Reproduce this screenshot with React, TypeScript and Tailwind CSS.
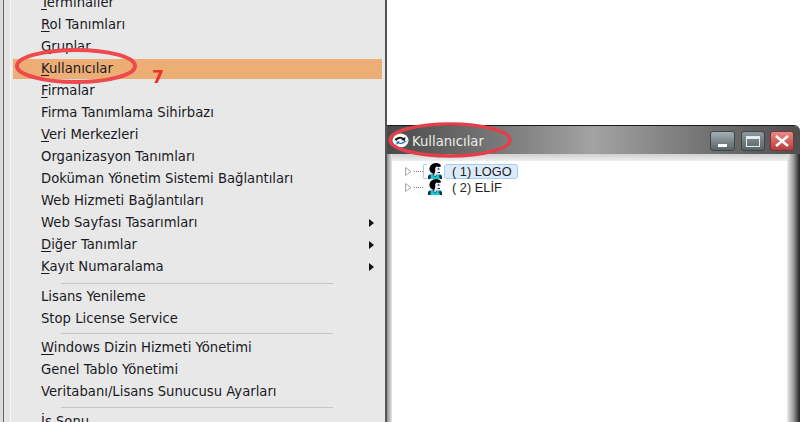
const menuFont = { fontFamily: '"DejaVu Sans", Tahoma, sans-serif' };

type Row = { label: string; key?: string; rest?: string; arrow?: boolean; active?: boolean };

const groups: Row[][] = [
  [
    { label: "", key: "T", rest: "erminaller" },
    { label: "", key: "R", rest: "ol Tanımları" },
    { label: "", key: "G", rest: "ruplar" },
    { label: "", key: "K", rest: "ullanıcılar", active: true },
    { label: "", key: "F", rest: "irmalar" },
    { label: "Firma Tanımlama Sihirbazı" },
    { label: "", key: "V", rest: "eri Merkezleri" },
    { label: "Organizasyon Tanımları" },
    { label: "Doküman Yönetim Sistemi Bağlantıları" },
    { label: "Web Hizmeti Bağlantıları" },
    { label: "Web Sayfası Tasarımları", arrow: true },
    { label: "", key: "D", rest: "iğer Tanımlar", arrow: true },
    { label: "", key: "K", rest: "ayıt Numaralama", arrow: true },
  ],
  [{ label: "Lisans Yenileme" }, { label: "Stop License Service" }],
  [
    { label: "", key: "W", rest: "indows Dizin Hizmeti Yönetimi" },
    { label: "Genel Tablo Yönetimi" },
    { label: "Veritabanı/Lisans Sunucusu Ayarları" },
  ],
  [{ label: "İş Sonu" }],
];

const separatorGaps = ["mt-[5px] mb-[2px]", "mt-[3px] mb-[3px]", "mt-[4px] mb-[3px]"];

function MenuRow({ row }: { row: Row }) {
  return (
    <div className="h-[22px] py-px">
      <div
        className={`flex h-[20px] items-center justify-between pl-[28px] pr-[8px] text-[13.2px] text-[#1a1a24] ${
          row.active ? "bg-[#edae75]" : ""
        }`}
      >
        <span className="whitespace-nowrap">
          {row.key ? <span className="underline underline-offset-2">{row.key}</span> : null}
          {row.rest ?? row.label}
        </span>
        {row.arrow ? (
          <span className="h-0 w-0 border-y-[4px] border-l-[5px] border-y-transparent border-l-[#111]" />
        ) : null}
      </div>
    </div>
  );
}

function Person() {
  return (
    <svg width="16" height="16" viewBox="0 0 16 16" className="shrink-0">
      <path d="M1 16v-2c0-2 2-3 4-3h6c2 0 4 1 4 3v2z" fill="#17c6d6" />
      <path d="M1 16v-2c0-1 1-2 2-2.500l1 1.500-1 3zM15 16v-2c0-1-1-2-2-2.500L12 13l1 3z" fill="#06303a" />
      <path d="M6 11l2 3 2.500-3z" fill="#fff" stroke="#000" strokeWidth="0.600" />
      <path d="M6 3h6.500l1.500 4-.8 1 .3 2-2 1.500H8L6 9z" fill="#f2f2f2" />
      <path d="M2.500 7C2 3 5 0 9 0c3 0 5 1.500 5 3.500-2 .5-3.500.5-5 0-.5 1.500-1 2-.8 3.500.2 1.500-.2 3-1.200 4C5 10.500 3 9.500 2.500 7z" fill="#000" />
      <circle cx="11.500" cy="6" r="1" fill="#2457d6" />
      <path d="M10.500 9.500h2.500" stroke="#000" strokeWidth="0.900" />
    </svg>
  );
}

function TreeItem({ label, selected }: { label: string; selected?: boolean }) {
  return (
    <div className="flex h-[16px] items-center">
      <svg width="7" height="9" viewBox="0 0 7 9" className="ml-[13px] shrink-0">
        <path d="M.5.5l5.500 4-5.500 4z" fill="#fff" stroke="#a8a8a8" />
      </svg>
      <span className="ml-[2px] w-[9px] border-t border-dotted border-[#777]" />
      <span className={`h-[15px] w-[4px] rounded-l-[2px] border-y border-l ${selected ? "border-[#a9cdf0]" : "border-transparent"}`} />
      <Person />
      <span
        className={`ml-px h-[15px] w-[74px] shrink-0 whitespace-nowrap rounded-[3px] border pl-[7px] text-[12.8px] leading-[13px] text-[#222] ${
          selected ? "border-[#a9cdf0] bg-[#dcebfb]" : "border-transparent"
        }`}
        style={{ fontFamily: '"Liberation Sans", Arial, sans-serif' }}
      >
        {label}
      </span>
    </div>
  );
}

function WindowWidget() {
  return (
    <div className="absolute left-[387px] top-[125px] flex h-[320px] w-[413px] flex-col overflow-hidden rounded-tr-[6px] border-t border-[#1a1a1a]">
      <div className="flex h-[28px] shrink-0 items-start bg-gradient-to-r from-[#4a4a4a] via-[#a3a3a3] via-50% to-[#4e4e4e] pr-[6px]">
        <svg width="17" height="15" viewBox="0 0 17 15" className="ml-[5px] mt-[7px] shrink-0">
          <ellipse cx="8.500" cy="7.500" rx="8" ry="7" fill="#fff" />
          <path d="M2.500 6.500C5 3.500 9 3 11.500 5L13.500 4l-.5 4-4-1 1.200-1C8 5.200 6 5.800 4.500 8z" fill="#1c1c1c" />
          <path d="M14.500 8c-2 3-6 3.500-8.500 2.500L4.500 12l0-3.500 3.500 0-1 1c2 .6 4.200.2 5.500-1.700z" fill="#1f6fb0" />
        </svg>
        <span className="ml-[3px] mt-[7px] text-[13.2px] leading-[18px] text-[#ececec]">Kullanıcılar</span>
        <div className="ml-auto mt-[5px] flex">
          <div className="flex h-[20px] w-[25px] items-end justify-center rounded-[3px] border border-[#3f4648] bg-gradient-to-b from-[#a4b0b5] to-[#596468] pb-[3px]">
            <span className="h-[3px] w-[9px] bg-white" />
          </div>
          <div className="ml-[6px] flex h-[20px] w-[24px] items-center justify-center rounded-[3px] border border-[#3f4648] bg-gradient-to-b from-[#909a9e] to-[#596468]">
            <span className="h-[11px] w-[14px] border border-t-[3px] border-[#e8eef0]" />
          </div>
          <div className="ml-[5px] flex h-[20px] w-[24px] items-center justify-center rounded-[3px] border border-[#7a3535] bg-gradient-to-b from-[#ea8a88] to-[#b83a3c]">
            <svg width="14" height="12" viewBox="0 0 14 12">
              <path d="M1 1l12 10M13 1L1 11" stroke="#fff" strokeWidth="2.500" />
            </svg>
          </div>
        </div>
      </div>
      <div className="flex min-h-0 flex-1">
        <div className="w-[5px] bg-gradient-to-r from-[#8f8f8f] to-[#e6e6e6]" />
        <div className="flex flex-1 flex-col">
          <div className="h-[7px] bg-gradient-to-b from-[#d0d0d0] to-[#eeeeee]" />
          <div className="flex-1 bg-white pt-[2px]">
            <TreeItem label="( 1) LOGO" selected />
            <TreeItem label="( 2) ELİF" />
          </div>
        </div>
        <div className="w-[13px] bg-gradient-to-r from-[#ececec] via-[#9a9a9a] via-50% to-[#222]" />
      </div>
    </div>
  );
}

export default function App() {
  return (
    <div className="relative h-[422px] w-[805px] overflow-hidden bg-white" style={menuFont}>
      <div className="flex h-full w-[387px]">
        <div className="w-[3px] bg-[#dcdcdc]" />
        <div className="w-[7px] border-l border-[#666] bg-[#e4e4e4]" />
        <div className="-mt-[8px] flex-1 border-l border-[#f6f6f6] bg-[#e8e8e8] pl-[2px] pr-[3px]">
          {groups.map((group, i) => (
            <div key={i}>
              {i > 0 ? <div className={`ml-[48px] mr-[49px] h-px bg-[#c6c6c6] ${separatorGaps[i - 1]}`} /> : null}
              {group.map((row, j) => (
                <MenuRow key={j} row={row} />
              ))}
            </div>
          ))}
        </div>
        <div className="w-[2px] bg-[#555]" />
      </div>
      <span className="absolute left-[152px] top-[67px] text-[17px] font-bold leading-[20px] text-[#e8322c]">7</span>
      <WindowWidget />
      <svg width="805" height="422" className="pointer-events-none absolute left-0 top-0">
        <ellipse cx="76" cy="66" rx="59" ry="16" fill="none" stroke="#ee4a4e" strokeWidth="4" />
        <ellipse cx="450" cy="140" rx="60" ry="16" fill="none" stroke="#e0404a" strokeWidth="3.500" />
      </svg>
    </div>
  );
}
